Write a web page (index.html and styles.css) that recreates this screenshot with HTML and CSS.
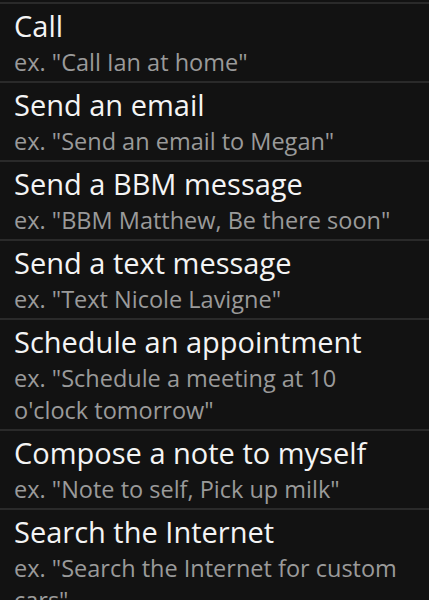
FILE: index.html
```html
<!DOCTYPE html>
<html>

<head>
  <meta name="viewport" content="width=device-width, initial-scale=1">
  <link rel="stylesheet" href="styles.css">
</head>

<body>
  <ul class="commands">
    <li class="item">
      <div class="title">Call</div>
      <div class="example">ex. "Call Ian at home"</div>
    </li>
    <li class="item">
      <div class="title">Send an email</div>
      <div class="example">ex. "Send an email to Megan"</div>
    </li>
    <li class="item">
      <div class="title">Send a BBM message</div>
      <div class="example">ex. "BBM Matthew, Be there soon"</div>
    </li>
    <li class="item">
      <div class="title">Send a text message</div>
      <div class="example">ex. "Text Nicole Lavigne"</div>
    </li>
    <li class="item">
      <div class="title">Schedule an appointment</div>
      <div class="example">ex. "Schedule a meeting at 10 o'clock tomorrow"</div>
    </li>
    <li class="item">
      <div class="title">Compose a note to myself</div>
      <div class="example">ex. "Note to self, Pick up milk"</div>
    </li>
    <li class="item">
      <div class="title">Search the Internet</div>
      <div class="example">ex. "Search the Internet for custom cars"</div>
    </li>
  </ul>
</body>

</html>
```

FILE: styles.css
```css
* {
  box-sizing: border-box;
}

body {
  margin: 0;
  padding-top: 2px;
  background-color: #121212;
  font-family: "Open Sans", "Noto Sans", sans-serif;
  overflow: hidden;
}

/* list of voice commands */
.commands {
  list-style: none;
  margin: 0;
  padding: 0;
  border-top: 2px solid #2a2a2a;
}

.item {
  padding: 4px 20px 3px 14px;
  border-bottom: 2px solid #2a2a2a;
}

.title {
  color: #f4f4f4;
  font-size: 29px;
  line-height: 36px;
}

.example {
  margin-top: 2px;
  color: #9a9a9a;
  font-size: 23.5px;
  line-height: 32px;
}
```
